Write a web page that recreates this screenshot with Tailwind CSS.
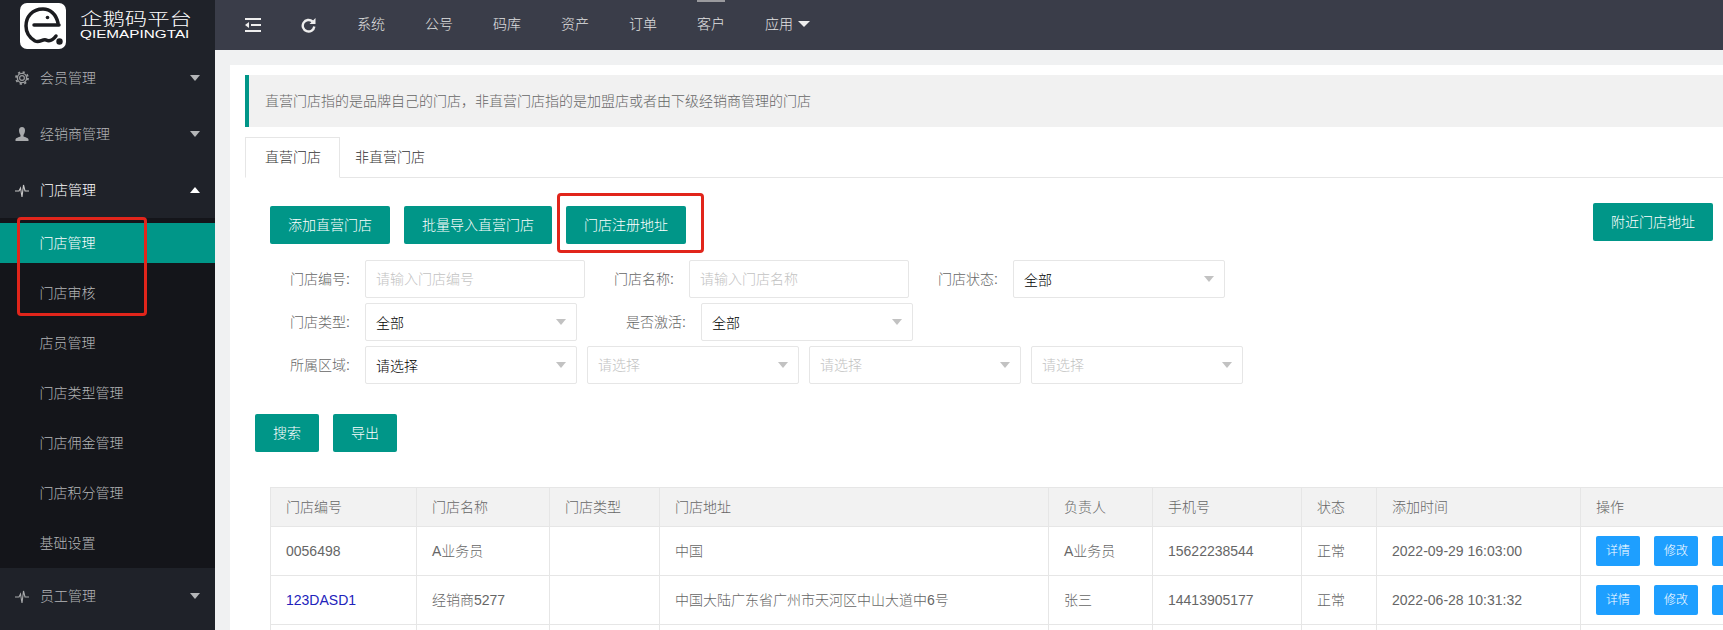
<!DOCTYPE html>
<html lang="zh-CN">
<head>
    <meta charset="UTF-8">
    <title>企鹅码平台</title>
    <script src="https://cdn.jsdelivr.net/npm/@tailwindcss/browser@4"></script>
</head>
<body class="w-[1723px] h-[630px] overflow-hidden bg-[#f0f1f2] text-[14px] text-[#666] font-light font-['Liberation_Sans','Noto_Sans_CJK_SC',sans-serif]">
    <div class="flex h-[630px]">
        <!-- sidebar -->
        <aside class="w-[215px] shrink-0 bg-[#1f2229] text-[#b4b6b8]">
            <div class="h-[50px] flex items-start pl-[20px] pt-[3px]">
                <svg class="w-[46px] h-[46px] shrink-0" viewBox="0 0 46 46">
                    <rect width="46" height="46" rx="7" fill="#fff"/>
                    <path d="M38 20C36 11 30 6 23 6 12 6 6 14 6 23c0 7 4 12 9 15 5 2 7-2 11-1 4 2 7 0 10-4" fill="none" stroke="#1b1c20" stroke-width="3.5" stroke-linecap="round"/>
                    <path d="M14 22h25" stroke="#1b1c20" stroke-width="3.5" stroke-linecap="round"/>
                    <circle cx="27.5" cy="14.5" r="1.8" fill="#1b1c20"/>
                    <circle cx="39.5" cy="38.5" r="3.2" fill="#1b1c20"/>
                </svg>
                <div class="ml-[14px] pt-[10px] text-white">
                    <div class="text-[22.4px] leading-[17px] whitespace-nowrap scale-y-[0.78] origin-top-left">企鹅码平台</div>
                    <div class="mt-[1px] text-[15.3px] leading-[11px] whitespace-nowrap scale-y-[0.68] origin-top-left">QIEMAPINGTAI</div>
                </div>
            </div>

            <div class="h-[56px] flex items-center pl-[15px] pr-[15px]">
                <svg class="w-[14px] h-[16px]" viewBox="0 0 14 16" fill="none" stroke="#9a9c9e">
                    <circle cx="7" cy="8" r="2.4" stroke-width="1.2"/>
                    <circle cx="7" cy="8" r="4.6" stroke-width="1.4"/>
                    <circle cx="7" cy="8" r="6" stroke-width="1.8" stroke-dasharray="2.2 2.5"/>
                </svg>
                <span class="ml-[11px]">会员管理</span>
                <span class="ml-auto w-0 h-0 border-x-[5.5px] border-x-transparent border-t-[6px] border-t-[#b4b6b8]"></span>
            </div>
            <div class="h-[56px] flex items-center pl-[15px] pr-[15px]">
                <svg class="w-[14px] h-[16px]" viewBox="0 0 14 16" fill="#a8aaac">
                    <path d="M7 1c2 0 3 1.500 3 3.500S9 8 8.500 9v1.500c1.500.7 5 1.500 5 3V15H.5v-1.500c0-1.500 3.500-2.300 5-3V9C5 8 4 6.500 4 4.500S5 1 7 1z"/>
                </svg>
                <span class="ml-[11px]">经销商管理</span>
                <span class="ml-auto w-0 h-0 border-x-[5.5px] border-x-transparent border-t-[6px] border-t-[#b4b6b8]"></span>
            </div>
            <div class="h-[56px] flex items-center pl-[15px] pr-[15px] text-white">
                <svg class="w-[14px] h-[16px]" viewBox="0 0 14 16" fill="none" stroke="#c8c8c8" stroke-width="1.1">
                    <path d="M0 9h4l1.500-3 1.500 9 1.500-12 1.500 6h4"/>
                </svg>
                <span class="ml-[11px]">门店管理</span>
                <span class="ml-auto w-0 h-0 border-x-[5.5px] border-x-transparent border-b-[6px] border-b-white"></span>
            </div>

            <div class="relative bg-[#14151a] h-[350px] py-[5px]">
                <div class="h-[40px] flex items-center pl-[39.500px] bg-[#009688] text-white">门店管理</div>
                <div class="h-[40px] mt-[10px] flex items-center pl-[39.500px]">门店审核</div>
                <div class="h-[40px] mt-[10px] flex items-center pl-[39.500px]">店员管理</div>
                <div class="h-[40px] mt-[10px] flex items-center pl-[39.500px]">门店类型管理</div>
                <div class="h-[40px] mt-[10px] flex items-center pl-[39.500px]">门店佣金管理</div>
                <div class="h-[40px] mt-[10px] flex items-center pl-[39.500px]">门店积分管理</div>
                <div class="h-[40px] mt-[10px] flex items-center pl-[39.500px]">基础设置</div>
                <span class="absolute left-[17px] top-[-1px] w-[130px] h-[99px] border-[3px] border-[#e1251b] rounded-[4px]"></span>
            </div>

            <div class="h-[56px] flex items-center pl-[15px] pr-[15px]">
                <svg class="w-[14px] h-[16px]" viewBox="0 0 14 16" fill="none" stroke="#a8aaac" stroke-width="1.1">
                    <path d="M0 9h4l1.500-3 1.500 9 1.500-12 1.500 6h4"/>
                </svg>
                <span class="ml-[11px]">员工管理</span>
                <span class="ml-auto w-0 h-0 border-x-[5.5px] border-x-transparent border-t-[6px] border-t-[#b4b6b8]"></span>
            </div>
        </aside>

        <div class="flex-1 min-w-0">
            <!-- top bar -->
            <header class="h-[50px] bg-[#3a3d49] flex items-center text-[#e2e2e2]">
                <svg class="ml-[30px] w-[16px] h-[14px]" viewBox="0 0 16 14" fill="#eee">
                    <rect width="16" height="2" y="0"/>
                    <rect width="10" height="2" x="6" y="6"/>
                    <rect width="16" height="2" y="12"/>
                    <path d="M0 7l4-3v6z"/>
                </svg>
                <svg class="ml-[40px] w-[15px] h-[16px]" viewBox="0 0 15 16" fill="none" stroke="#eee" stroke-width="2.400">
                    <path d="M11.500 4.500A5.800 5.800 0 1 0 13.300 9.500"/>
                    <path d="M14.500 1v6h-6z" fill="#eee" stroke="none"/>
                </svg>
                <nav class="ml-[21px] flex items-center">
                    <a class="w-[68px] pl-[20px] mb-[2px]">系统</a>
                    <a class="w-[68px] pl-[20px] mb-[2px]">公号</a>
                    <a class="w-[68px] pl-[20px] mb-[2px]">码库</a>
                    <a class="w-[68px] pl-[20px] mb-[2px]">资产</a>
                    <a class="w-[68px] pl-[20px] mb-[2px]">订单</a>
                    <a class="w-[68px] pl-[20px] mb-[2px] relative">客户<span class="absolute left-[20px] top-[-14px] w-[28px] h-[2px] bg-[#9a9a9e]"></span></a>
                    <a class="pl-[20px] mb-[2px] flex items-center">应用<span class="ml-[5px] w-0 h-0 border-x-[6px] border-x-transparent border-t-[6px] border-t-[#eee]"></span></a>
                </nav>
            </header>

            <!-- content -->
            <main class="ml-[15px] mt-[15px] h-[565px] bg-white pt-[10px] pl-[15px] overflow-hidden">
                <div class="h-[52px] bg-[#f1f1f1] border-l-4 border-l-[#009688] pl-[16px] flex items-center">直营门店指的是品牌自己的门店，非直营门店指的是加盟店或者由下级经销商管理的门店</div>

                <div class="mt-[10px] h-[41px] flex border-b border-b-[#e6e6e6]">
                    <div class="w-[95px] h-[41px] pl-[19px] flex items-center border border-[#e6e6e6] border-b-white bg-white text-[#333]">直营门店</div>
                    <div class="pl-[15px] flex items-center text-[#333]">非直营门店</div>
                </div>

                <div class="mt-[25px] pl-[25px] pr-[10px] h-[41px] flex justify-between items-start">
                    <div class="flex gap-[14px] mt-[3px] text-white">
                        <button class="w-[120px] h-[38px] rounded-[2px] bg-[#009688]">添加直营门店</button>
                        <button class="w-[148px] h-[38px] rounded-[2px] bg-[#009688]">批量导入直营门店</button>
                        <div class="relative">
                            <button class="w-[120px] h-[38px] rounded-[2px] bg-[#009688]">门店注册地址</button>
                            <span class="absolute left-[-9px] top-[-13px] w-[147px] h-[60px] border-[3px] border-[#e1251b] rounded-[4px]"></span>
                        </div>
                    </div>
                    <button class="w-[120px] h-[38px] rounded-[2px] bg-[#009688] text-white">附近门店地址</button>
                </div>

                <!-- filters -->
                <div class="mt-[16px] flex flex-col gap-[5px]">
                    <div class="flex h-[38px]">
                        <label class="w-[120px] pr-[15px] text-right leading-[38px]">门店编号:</label>
                        <div class="w-[220px] border border-[#e6e6e6] rounded-[2px] pl-[10px] leading-[37px] text-[#c2c2c2]">请输入门店编号</div>
                        <label class="w-[104px] pr-[15px] text-right leading-[38px]">门店名称:</label>
                        <div class="w-[220px] border border-[#e6e6e6] rounded-[2px] pl-[10px] leading-[37px] text-[#c2c2c2]">请输入门店名称</div>
                        <label class="w-[104px] pr-[15px] text-right leading-[38px]">门店状态:</label>
                        <div class="w-[212px] border border-[#e6e6e6] rounded-[2px] pl-[10px] pr-[10px] flex items-center justify-between text-black"><span class="mt-[2px]">全部</span><span class="w-0 h-0 border-x-[5.5px] border-x-transparent border-t-[6px] border-t-[#c2c2c2]"></span></div>
                    </div>
                    <div class="flex h-[38px]">
                        <label class="w-[120px] pr-[15px] text-right leading-[38px]">门店类型:</label>
                        <div class="w-[212px] border border-[#e6e6e6] rounded-[2px] pl-[10px] pr-[10px] flex items-center justify-between text-black"><span class="mt-[2px]">全部</span><span class="w-0 h-0 border-x-[5.5px] border-x-transparent border-t-[6px] border-t-[#c2c2c2]"></span></div>
                        <label class="w-[124px] pr-[15px] text-right leading-[38px]">是否激活:</label>
                        <div class="w-[212px] border border-[#e6e6e6] rounded-[2px] pl-[10px] pr-[10px] flex items-center justify-between text-black"><span class="mt-[2px]">全部</span><span class="w-0 h-0 border-x-[5.5px] border-x-transparent border-t-[6px] border-t-[#c2c2c2]"></span></div>
                    </div>
                    <div class="flex h-[38px]">
                        <label class="w-[120px] pr-[15px] text-right leading-[38px]">所属区域:</label>
                        <div class="w-[212px] border border-[#e6e6e6] rounded-[2px] pl-[10px] pr-[10px] flex items-center justify-between text-black"><span class="mt-[2px]">请选择</span><span class="w-0 h-0 border-x-[5.5px] border-x-transparent border-t-[6px] border-t-[#c2c2c2]"></span></div>
                        <div class="ml-[10px] w-[212px] border border-[#e6e6e6] rounded-[2px] pl-[10px] pr-[10px] flex items-center justify-between text-[#c2c2c2]"><span>请选择</span><span class="w-0 h-0 border-x-[5.5px] border-x-transparent border-t-[6px] border-t-[#c2c2c2]"></span></div>
                        <div class="ml-[10px] w-[212px] border border-[#e6e6e6] rounded-[2px] pl-[10px] pr-[10px] flex items-center justify-between text-[#c2c2c2]"><span>请选择</span><span class="w-0 h-0 border-x-[5.5px] border-x-transparent border-t-[6px] border-t-[#c2c2c2]"></span></div>
                        <div class="ml-[10px] w-[212px] border border-[#e6e6e6] rounded-[2px] pl-[10px] pr-[10px] flex items-center justify-between text-[#c2c2c2]"><span>请选择</span><span class="w-0 h-0 border-x-[5.5px] border-x-transparent border-t-[6px] border-t-[#c2c2c2]"></span></div>
                    </div>
                </div>

                <div class="mt-[30px] ml-[10px] flex gap-[14px] text-white">
                    <button class="w-[64px] h-[38px] rounded-[2px] bg-[#009688]">搜索</button>
                    <button class="w-[64px] h-[38px] rounded-[2px] bg-[#009688]">导出</button>
                </div>

                <!-- list -->
                <table class="mt-[35px] ml-[25px] w-[1500px] table-fixed border-collapse [&_td]:border [&_td]:border-[#e6e6e6] [&_td]:px-[15px] [&_th]:border [&_th]:border-[#e6e6e6] [&_th]:px-[15px] [&_th]:font-light [&_th]:text-left">
                    <colgroup>
                        <col class="w-[146px]"><col class="w-[133px]"><col class="w-[110px]"><col class="w-[389px]"><col class="w-[104px]"><col class="w-[149px]"><col class="w-[75px]"><col class="w-[204px]"><col class="w-[190px]">
                    </colgroup>
                    <thead>
                        <tr class="h-[39px] bg-[#f2f2f2]">
                            <th>门店编号</th><th>门店名称</th><th>门店类型</th><th>门店地址</th><th>负责人</th><th>手机号</th><th>状态</th><th>添加时间</th><th>操作</th>
                        </tr>
                    </thead>
                    <tbody>
                        <tr class="h-[49px]">
                            <td>0056498</td><td>A业务员</td><td></td><td>中国</td><td>A业务员</td><td>15622238544</td><td>正常</td><td>2022-09-29 16:03:00</td>
                            <td class="whitespace-nowrap"><div class="flex gap-[14px] text-white text-[12px]"><button class="w-[44px] h-[30px] shrink-0 rounded-[2px] bg-[#1e9fff]">详情</button><button class="w-[44px] h-[30px] shrink-0 rounded-[2px] bg-[#1e9fff]">修改</button><button class="w-[44px] h-[30px] shrink-0 rounded-[2px] bg-[#1e9fff]"></button></div></td>
                        </tr>
                        <tr class="h-[49px]">
                            <td class="text-[#2222bb]">123DASD1</td><td>经销商5277</td><td></td><td>中国大陆广东省广州市天河区中山大道中6号</td><td>张三</td><td>14413905177</td><td>正常</td><td>2022-06-28 10:31:32</td>
                            <td class="whitespace-nowrap"><div class="flex gap-[14px] text-white text-[12px]"><button class="w-[44px] h-[30px] shrink-0 rounded-[2px] bg-[#1e9fff]">详情</button><button class="w-[44px] h-[30px] shrink-0 rounded-[2px] bg-[#1e9fff]">修改</button><button class="w-[44px] h-[30px] shrink-0 rounded-[2px] bg-[#1e9fff]"></button></div></td>
                        </tr>
                        <tr class="h-[49px]">
                            <td></td><td></td><td></td><td></td><td></td><td></td><td></td><td></td><td></td>
                        </tr>
                    </tbody>
                </table>
            </main>
        </div>
    </div>
</body>
</html>
